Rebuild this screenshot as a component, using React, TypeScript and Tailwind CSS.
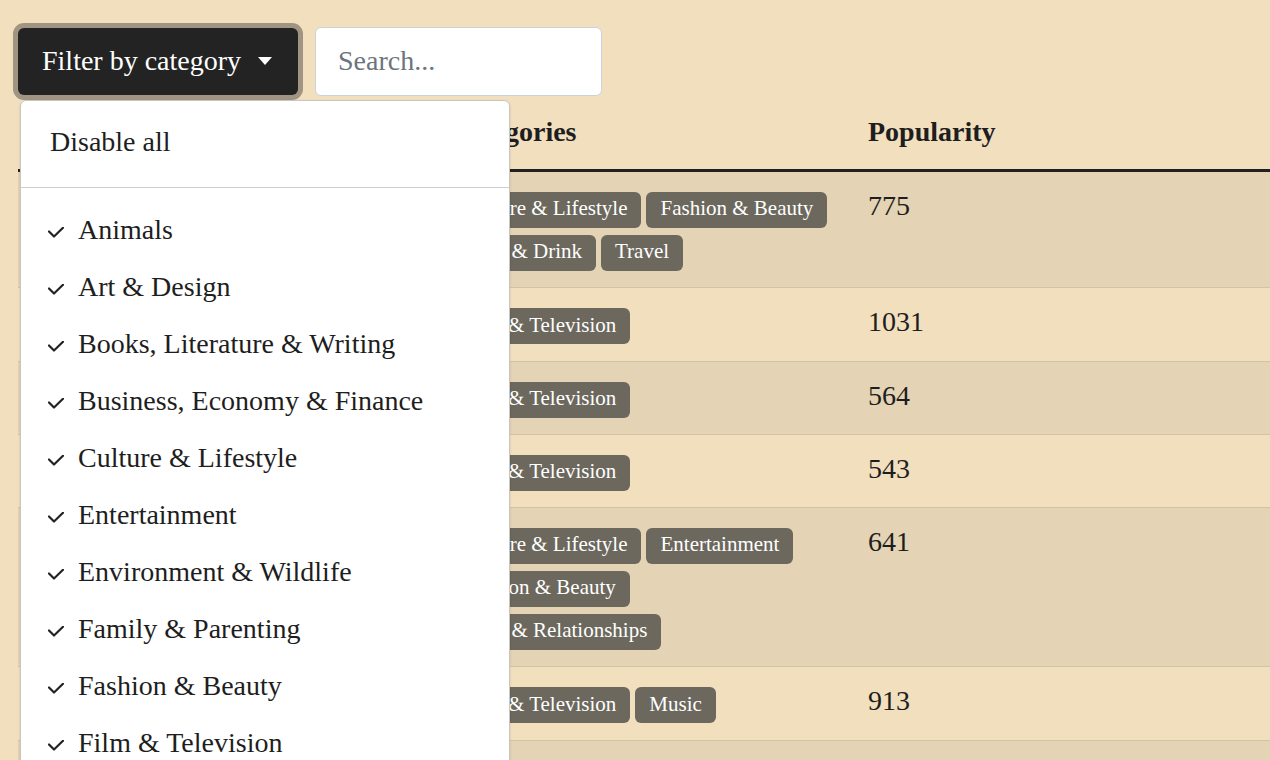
import { useState } from 'react'

const categories = [
  'Animals',
  'Art & Design',
  'Books, Literature & Writing',
  'Business, Economy & Finance',
  'Culture & Lifestyle',
  'Entertainment',
  'Environment & Wildlife',
  'Family & Parenting',
  'Fashion & Beauty',
  'Film & Television',
]

const shows = [
  { id: 1, cats: ['Culture & Lifestyle', 'Fashion & Beauty', 'Food & Drink', 'Travel'], pop: 775 },
  { id: 2, cats: ['Film & Television'], pop: 1031 },
  { id: 3, cats: ['Film & Television'], pop: 564 },
  { id: 4, cats: ['Film & Television'], pop: 543 },
  { id: 5, cats: ['Culture & Lifestyle', 'Entertainment', 'Fashion & Beauty', 'Love & Relationships'], pop: 641 },
  { id: 6, cats: ['Film & Television', 'Music'], pop: 913 },
  { id: 7, cats: [], pop: null },
]

function Check() {
  return (
    <svg width="16" height="11" viewBox="0 0 16 11" className="mt-[6px] shrink-0">
      <polyline points="1,4.5 6,9.5 15,0.8" fill="none" stroke="#222" strokeWidth="2.2" strokeLinecap="round" strokeLinejoin="round" />
    </svg>
  )
}

function CategoryMenu({ enabled }: { enabled: Set<string> }) {
  return (
    <div className="absolute left-[2px] top-[72px] z-10 w-[490px] rounded-[6px] border border-[#c9c6c0] bg-white pt-[12px] shadow-sm">
      <div className="flex h-[57px] items-center px-[29px] text-[28px]">Disable all</div>
      <div className="mb-[13px] mt-[17px] h-px bg-[#cfcfcf]" />
      {categories.map((c) => (
        <div key={c} className="flex h-[57px] items-center gap-[14px] pl-[27px] text-[28px]">
          {enabled.has(c) ? <Check /> : <span className="w-[16px]" />}
          <span>{c}</span>
        </div>
      ))}
    </div>
  )
}

export default function App() {
  const [enabled] = useState(() => new Set(categories))

  return (
    <div className="h-screen overflow-hidden bg-[#f2dfbe] font-['Liberation_Serif',serif] text-[#1e1e1e]">
      <div className="pl-[18px] pt-[27px]">
        <div className="flex items-center gap-[17px]">
          <div className="relative">
            <button className="flex h-[67px] w-[280px] items-center rounded-[6px] bg-[#232323] pb-[2px] pl-[24px] text-[28px] text-white ring-[5px] ring-[#a09583]">
              Filter by category
              <svg width="14" height="8" viewBox="0 0 14 8" className="ml-[17px]">
                <polygon points="0,0 14,0 7,8" fill="white" />
              </svg>
            </button>
            <CategoryMenu enabled={enabled} />
          </div>
          <input
            placeholder="Search..."
            className="h-[69px] w-[287px] rounded-[6px] border border-[#c9d3dd] bg-white px-[22px] pb-[2px] text-[28px] placeholder:text-[#6c757d] outline-none"
          />
        </div>

        <table className="mt-[4px] w-[1300px] table-fixed border-separate border-spacing-0 text-left">
          <colgroup>
            <col className="w-[423px]" />
            <col className="w-[419px]" />
            <col />
          </colgroup>
          <thead>
            <tr className="text-[28px] font-bold">
              <th className="border-b-[3px] border-[#212121] pb-[18px] pl-[8px] pt-[12px] leading-[39px]" />
              <th className="border-b-[3px] border-[#212121] pb-[18px] pl-[8px] pt-[12px] leading-[39px]">Categories</th>
              <th className="border-b-[3px] border-[#212121] pb-[18px] pl-[8px] pt-[12px] leading-[39px]">Popularity</th>
            </tr>
          </thead>
          <tbody>
            {shows.map((s, i) => (
              <tr key={s.id} className={i % 2 === 0 ? 'bg-[#e4d3b4]' : ''}>
                <td className="border-b border-[#d3c3a6] pb-[16.3px] pt-[20px]" />
                <td className="border-b border-[#d3c3a6] pb-[16.3px] pl-[8px] pr-[23px] pt-[20px] align-top">
                  <div className="flex min-h-[36px] flex-wrap gap-x-[5px] gap-y-[7px]">
                    {s.cats.map((c) => (
                      <span
                        key={c}
                        className="inline-flex h-[36px] items-center whitespace-nowrap rounded-[6px] bg-[#6c685d] px-[14px] pb-[2px] text-[21px] text-white"
                      >
                        {c}
                      </span>
                    ))}
                  </div>
                </td>
                <td className="border-b border-[#d3c3a6] pb-[16.3px] pl-[8px] pt-[20px] align-top text-[28px] leading-[28px]">
                  {s.pop}
                </td>
              </tr>
            ))}
          </tbody>
        </table>
      </div>
    </div>
  )
}
